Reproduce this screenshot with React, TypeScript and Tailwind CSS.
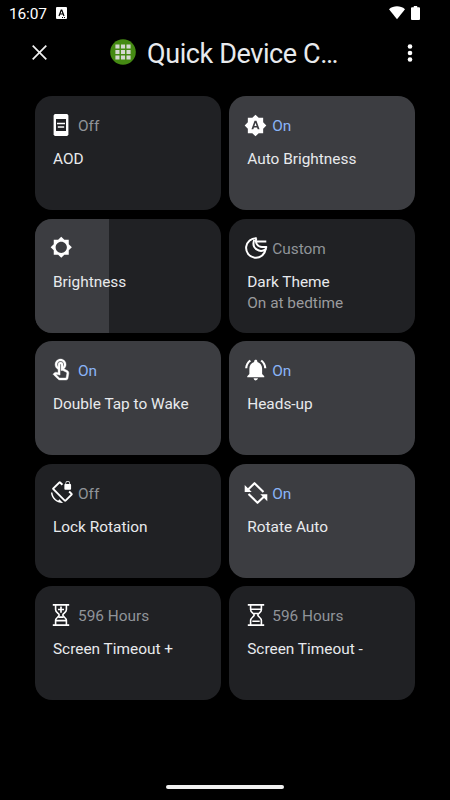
import type { ReactNode } from 'react';
import { MdBrightnessAuto, MdBrightnessLow, MdNotificationsActive, MdOutlineTouchApp, MdScreenLockRotation } from 'react-icons/md';

interface Tile {
  name: string;
  icon: ReactNode;
  status?: string;
  detail?: string;
  active?: boolean;
  level?: number;
}

const AodIcon = () => (
  <svg viewBox="0 0 24 24" className="w-6 h-6" fill="none">
    <rect x="4.6" y="1" width="14.8" height="22" rx="1.8" fill="white" />
    <rect x="7" y="6" width="10" height="12" fill="#202124" />
    <path d="M8 10.5h8M8.8 14h6.4" stroke="white" strokeWidth="1.7" />
  </svg>
);

const MoonIcon = () => (
  <svg viewBox="0 0 24 24" className="w-6 h-6" fill="none" stroke="white" strokeWidth="2" strokeLinejoin="round">
    <path d="M12.7 2.2A9.8 9.8 0 1 0 21.6 13.4C16 17.4 7 12.6 10.2 4" />
    <path d="M12.4 2.3C10.6 6.6 13.6 11 18 11H22.4L21.6 13.4" strokeWidth="1.8" />
    <path d="M12.5 5.5h9.8" strokeWidth="2.2" />
  </svg>
);

const RotateIcon = () => (
  <svg viewBox="0 0 24 24" className="w-6 h-6" fill="none" stroke="white" strokeWidth="2.1">
    <path d="M3.6 9 10.5 2.2 19.5 11M4.5 13 13.5 21.8 20.4 15.2" strokeLinejoin="round" />
    <path d="M.7 4v7h7zM23.3 20.3v-7h-7z" fill="white" stroke="none" />
  </svg>
);

const HourglassIcon = ({ plus }: { plus?: boolean }) => (
  <svg viewBox="0 0 24 24" className="w-6 h-6" fill="none" stroke="white" strokeWidth="1.6">
    <path d="M3.8 1.9h16.4M3.8 22.1h16.4" />
    <path d="M6.6 2v4.8c0 2.8 3.6 3.5 3.6 5.2s-3.6 2.6-3.6 5.5V22M17.4 2v4.8c0 2.8-3.6 3.500-3.600 5.200s3.600 2.600 3.600 5.500V22" />
    {plus ? (
      <path d="M12 3.500v6.200M9 6.500h6M7 17.700h10M9.300 14.200h5.400" strokeWidth="1.700" />
    ) : (
      <path d="M7 6.300h10M8.300 18.200h7.400M9.600 10.600h4.800" strokeWidth="1.500" />
    )}
  </svg>
);

const tiles: Tile[] = [
  { name: 'AOD', status: 'Off', icon: <AodIcon /> },
  { name: 'Auto Brightness', status: 'On', active: true, icon: <MdBrightnessAuto className="w-[23px] h-[23px]" /> },
  { name: 'Brightness', level: 40, icon: <MdBrightnessLow className="w-[22.5px] h-[22.5px]" /> },
  { name: 'Dark Theme', status: 'Custom', detail: 'On at bedtime', icon: <MoonIcon /> },
  {
    name: 'Double Tap to Wake',
    status: 'On',
    active: true,
    icon: <MdOutlineTouchApp className="w-6 h-6 stroke-white stroke-[0.4] [&>path[fill=none]]:hidden" />,
  },
  {
    name: 'Heads-up',
    status: 'On',
    active: true,
    icon: <MdNotificationsActive className="w-[25.5px] h-[25.5px] shrink-0" />,
  },
  { name: 'Lock Rotation', status: 'Off', icon: <MdScreenLockRotation className="w-[23px] h-[23px]" /> },
  { name: 'Rotate Auto', status: 'On', active: true, icon: <RotateIcon /> },
  { name: 'Screen Timeout +', status: '596 Hours', icon: <HourglassIcon plus /> },
  { name: 'Screen Timeout -', status: '596 Hours', icon: <HourglassIcon /> },
];

function TileCard({ tile }: { tile: Tile }) {
  return (
    <div className={`relative h-[114px] overflow-hidden rounded-[17px] ${tile.active ? 'bg-[#3c3d41]' : 'bg-[#202124]'}`}>
      {tile.level !== undefined && (
        <div className="absolute inset-y-0 left-0 bg-[#3c3d41]" style={{ width: `${tile.level}%` }} />
      )}
      <div className="relative pt-[17px] pl-[14.4px]">
        <div className="flex h-6 items-center">
          <div className="flex w-6 h-6 items-center justify-center text-white">{tile.icon}</div>
          <span className={`ml-[4.6px] mt-[2px] text-[15.4px] leading-5 ${tile.active ? 'text-[#8ab4f8]' : 'text-[#909499]'}`}>
            {tile.status}
          </span>
        </div>
        <div className="ml-[3.6px] mt-[12.4px] text-[15.4px] leading-[21px] text-[#e8eaed]">
          <p>{tile.name}</p>
          {tile.detail && <p className="text-[#9a9b9e]">{tile.detail}</p>}
        </div>
      </div>
    </div>
  );
}

export default function App() {
  return (
    <main className="flex h-[800px] w-[450px] flex-col overflow-hidden bg-black font-['Roboto',sans-serif] text-white">
      {/* Status bar */}
      <div className="flex h-7 items-center pl-[9px] pr-[30px]">
        <span className="w-[38px] whitespace-nowrap text-[15.5px] leading-7 tracking-[-0.15px]">16:07</span>
        <svg viewBox="0 0 11 12" className="ml-[9px] mt-[-2px] h-3 w-[11px]">
          <rect width="11" height="12" rx="1" fill="white" />
          <path d="M3 9 5.2 3h.6L8 9M3.8 7h3.4" fill="none" stroke="black" strokeWidth="1.2" />
          <path d="M6 10.5h1M8 10.5h1" stroke="black" />
        </svg>
        <svg viewBox="0 0 16 14" className="ml-auto mt-[-2px] h-[14px] w-4" fill="white">
          <path d="M0 3.2C4.6-.6 11.4-.6 16 3.2L8 13.3z" />
        </svg>
        <svg viewBox="0 0 9 14" className="ml-[6px] mt-[-2px] h-[14px] w-[9px]" fill="white">
          <path d="M2.8 0h3.4v1.3H8q1 0 1 1V13q0 1-1 1H1q-1 0-1-1V2.3q0-1 1-1h1.8z" />
        </svg>
      </div>

      {/* Header */}
      <header className="flex h-[68px] shrink-0 items-start pt-[6px] pl-[32px]">
        <svg viewBox="0 0 15 15" className="mt-[11px] h-[15px] w-[15px]" stroke="#f1f1f1" strokeWidth="1.7">
          <path d="M.7.7l13.6 13.6M14.3.7.7 14.3" />
        </svg>
        <svg viewBox="0 0 26 26" className="ml-[63px] mt-[5px] h-[26px] w-[26px]">
          <circle cx="13" cy="13" r="12.8" fill="#458a13" />
          <path d="M5.4 7.5h15.2M5.4 13h15.2M5.4 18.5h15.2" stroke="#d5d8d0" strokeWidth="4.1" strokeDasharray="4.1 1.45" />
        </svg>
        <h1 className="ml-[11px] mt-[1px] text-[27px] leading-[38px] tracking-[-0.4px] text-[#e8eaed]">Quick Device C…</h1>
        <svg viewBox="0 0 6 18" className="ml-auto mr-[37px] mt-[10px] h-[18px] w-[6px]" fill="white">
          <circle cx="3" cy="2.5" r="2.3" />
          <circle cx="3" cy="9" r="2.3" />
          <circle cx="3" cy="15.5" r="2.3" />
        </svg>
      </header>

      <div className="grid grid-cols-2 gap-[8.5px] pl-[35px] pr-[35px]">
        {tiles.map((tile) => (
          <TileCard key={tile.name} tile={tile} />
        ))}
      </div>

      {/* Gesture bar */}
      <div className="mx-auto mb-[11px] mt-auto h-[4px] w-[118px] rounded-full bg-[#f1f1f1]" />
    </main>
  );
}
